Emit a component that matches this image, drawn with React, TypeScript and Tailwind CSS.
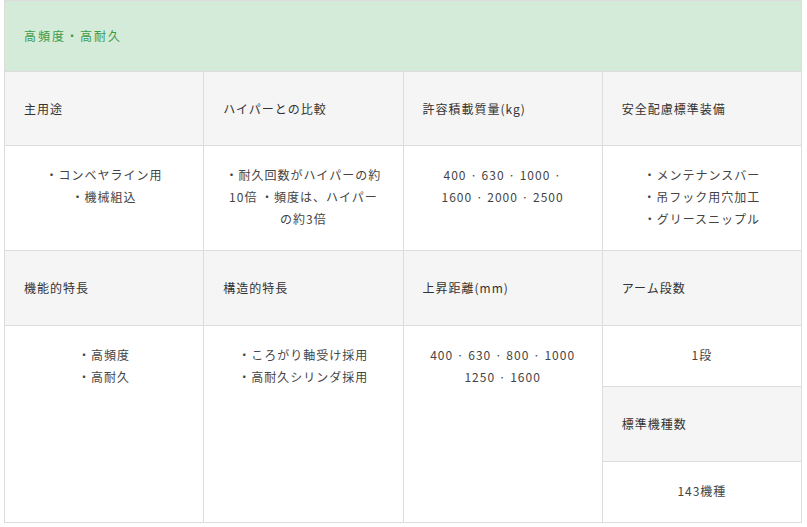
const FONT = "font-['Noto_Sans_CJK_JP','Noto_Sans',sans-serif]";

function Head({ children, short = false }: { children: React.ReactNode; short?: boolean }) {
  return (
    <div
      className={`flex ${short ? 'h-[73px]' : 'h-[74px]'} items-center bg-[#f5f5f5] pl-[19px] text-[12px] tracking-[1px] text-[#333]`}
    >
      {children}
    </div>
  );
}

function Val({ lines, className = '' }: { lines: string[]; className?: string }) {
  return (
    <div className={`bg-white px-4 pt-[18px] pb-[18px] text-center text-[12px] leading-[22px] tracking-[1px] text-[#444] ${className}`}>
      {lines.map((l) => (
        <div key={l} className="whitespace-pre">
          {l}
        </div>
      ))}
    </div>
  );
}

export default function App() {
  return (
    <div className={`min-h-[527px] bg-white ${FONT}`}>
      <div className="ml-[4px] w-[798px] border border-[#dcdcdc] bg-[#dcdcdc]">
        <div className="flex h-[70px] items-center bg-[#d5ebd9] pl-[19px] text-[12px] tracking-[2px] text-[#3a9a46]">
          高頻度・高耐久
        </div>
        <div className="mt-px grid grid-cols-4 gap-px">
          <Head short>主用途</Head>
          <Head short>ハイパーとの比較</Head>
          <Head short>許容積載質量(kg)</Head>
          <Head short>安全配慮標準装備</Head>

          <Val className="h-[104px]" lines={['・コンベヤライン用', '・機械組込']} />
          <Val lines={['・耐久回数がハイパーの約', '10倍 ・頻度は、ハイパー', 'の約3倍']} />
          <Val className="text-[#222]" lines={['400 · 630 · 1000 ·', '1600 · 2000 · 2500']} />
          <Val lines={['・メンテナンスバー', '・吊フック用穴加工', '・グリースニップル']} />

          <Head>機能的特長</Head>
          <Head>構造的特長</Head>
          <Head>上昇距離(mm)</Head>
          <Head>アーム段数</Head>

          <Val className="row-span-3" lines={['・高頻度', '・高耐久']} />
          <Val className="row-span-3" lines={['・ころがり軸受け採用', '・高耐久シリンダ採用']} />
          <Val className="row-span-3 text-[#222]" lines={['400 · 630 · 800 · 1000', '1250 · 1600']} />
          <Val className="h-[60px]" lines={['1段']} />
          <Head>標準機種数</Head>
          <Val className="h-[60px]" lines={['143機種']} />
        </div>
      </div>
    </div>
  );
}
